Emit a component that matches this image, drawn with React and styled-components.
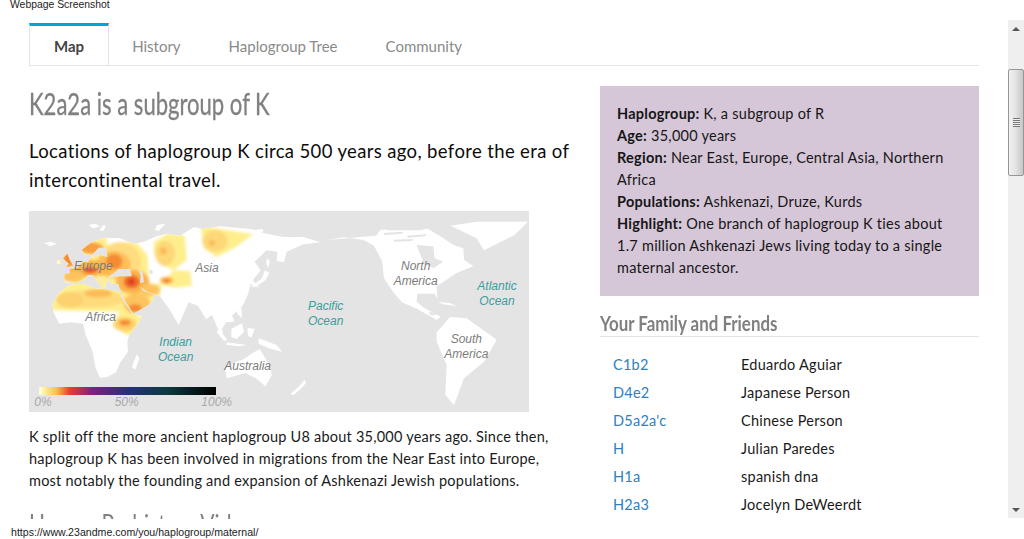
import React from 'react'
import styled, { createGlobalStyle } from 'styled-components'

const GlobalStyle = createGlobalStyle`
  html, body {
    margin: 0;
    height: 539px;
    overflow: hidden;
    background: #fff;
  }
`

const Page = styled.div`
  width: 1024px;
  height: 539px;
  display: flex;
  flex-direction: column;
  font-family: 'Lato', 'Noto Sans', sans-serif;
  color: #111;
`

const Caption = styled.div`
  height: 20px;
  flex: none;
  padding-left: 10px;
  font: 10.4px/10px 'Liberation Sans', Arial, sans-serif;
  color: #222;
`

const Viewport = styled.div`
  flex: none;
  height: 499px;
  display: flex;
  overflow: hidden;
`

const Content = styled.main`
  flex: 1;
  min-width: 0;
  padding: 3px 29px 0;
  overflow: hidden;
`

const Tabs = styled.nav`
  display: flex;
  height: 43px;
  box-sizing: border-box;
  border-bottom: 1px solid #e4e4e4;
`

const Tab = styled.a`
  box-sizing: border-box;
  height: 43px;
  padding: 0 24px;
  font-size: 15px;
  line-height: 40px;
  color: ${p => (p.$active ? '#444' : '#8a8a8a')};
  font-weight: ${p => (p.$active ? 700 : 400)};
  border-top: 3px solid ${p => (p.$active ? '#00a5d6' : 'transparent')};
  border-left: 1px solid ${p => (p.$active ? '#e4e4e4' : 'transparent')};
  border-right: 1px solid ${p => (p.$active ? '#e4e4e4' : 'transparent')};
  margin: 0 -1px;
  &:first-child { margin-left: 0; }
`

const Columns = styled.div`
  display: grid;
  grid-template-columns: 541px 379px;
  column-gap: 30px;
  padding-top: 20px;
`

const Title = styled.h1`
  margin: 0;
  font-size: 30px;
  line-height: 34px;
  font-weight: 400;
  color: #808080;
  -webkit-text-stroke: 0.3px #808080;
  white-space: nowrap;
  transform: scaleX(0.735);
  transform-origin: left center;
`

const Lead = styled.p`
  margin: 17px 0 16px;
  font-size: 18.5px;
  line-height: 29px;
  letter-spacing: 0.36px;
  color: #0c0c0c;
`

const MapFigure = styled.svg`
  display: block;
  width: 500px;
  height: 201px;
  background: #e4e4e4;
`

const MapLabel = styled.text`
  font-family: 'Liberation Sans', Arial, sans-serif;
  font-style: italic;
  font-size: 36px;
  text-anchor: middle;
  fill: ${p => (p.$ocean ? '#3d9c9c' : p.$scale ? '#a9a9a9' : '#7c7c7c')};
`

const Body = styled.p`
  margin: 14px 0 0;
  font-size: 14.5px;
  line-height: 22px;
  letter-spacing: 0.23px;
  color: #1a1a1a;
`

const SubTitle = styled.h2`
  margin: 0;
  font-size: 27px;
  font-weight: 400;
  color: #808080;
  white-space: nowrap;
  transform: scaleX(0.78);
  transform-origin: left center;
`

const ClippedTitle = styled(SubTitle)`
  margin-top: 17px;
  line-height: 30px;
`

const InfoPanel = styled.aside`
  height: 210px;
  box-sizing: border-box;
  padding: 17px;
  background: #d5c6d8;
  font-size: 14.5px;
  line-height: 22px;
  letter-spacing: 0.25px;
  color: #161616;
  b { font-weight: 700; }
`

const FriendsHead = styled.div`
  margin-top: 13px;
  height: 27px;
  border-bottom: 1px solid #e4e4e4;
  overflow: hidden;
`

const FriendsTitle = styled(SubTitle)`
  font-size: 20px;
  line-height: 28px;
  font-weight: 700;
  transform: scaleX(0.845);
`

const FriendList = styled.div`
  display: grid;
  grid-template-columns: 128px 1fr;
  grid-auto-rows: 28px;
  padding: 14px 0 0 13px;
  font-size: 14.5px;
  line-height: 28px;
  letter-spacing: 0.25px;
`

const Code = styled.a`
  color: #2d80c4;
`

const Person = styled.span`
  color: #1a1a1a;
`

const Scrollbar = styled.div`
  width: 16px;
  flex: none;
  height: 498px;
  display: flex;
  flex-direction: column;
  background: #efefef;
`

const ScrollArrow = styled.div`
  height: 17px;
  flex: none;
  display: flex;
  align-items: center;
  justify-content: center;
  &::before {
    content: '';
    border-left: 4px solid transparent;
    border-right: 4px solid transparent;
    ${p => (p.$down ? 'border-top: 4px solid #555;' : 'border-bottom: 4px solid #555;')}
  }
`

const ScrollGap = styled.div`
  height: 32px;
  flex: none;
`

const ScrollThumb = styled.div`
  height: 107px;
  flex: none;
  box-sizing: border-box;
  border: 1px solid #979797;
  border-radius: 2px;
  background: linear-gradient(90deg, #f1f1f1 0%, #e4e4e4 45%, #c6c6c6 100%);
  display: flex;
  align-items: center;
  justify-content: center;
`

const ThumbGrip = styled.div`
  width: 7px;
  height: 9px;
  background: repeating-linear-gradient(180deg, #777 0 1px, #eee 1px 2px);
`

const ScrollFill = styled.div`
  flex: 1;
`

const StatusBar = styled.div`
  flex: none;
  height: 20px;
  box-sizing: border-box;
  padding: 8px 0 0 11px;
  font: 10.6px/11px 'Liberation Sans', Arial, sans-serif;
  color: #222;
`

// map outlines, in 3x screen units
const landOld = `
M98,296 L118,262 L150,240 L190,236 L222,250 L262,252 L298,262 L312,292 L338,328 L366,334 L352,358 L328,388 L322,410 L324,440 L300,474 L288,502 L262,516 L240,518 L226,486 L218,440 L196,388 L190,356 L150,352 L118,356 L100,322 Z
M132,208 L150,204 L148,192 L172,188 L190,170 L204,172 L212,156 L240,150 L262,156 L258,128 L236,128 L216,150 L196,148 L184,136 L214,112 L254,98 L300,100 L340,116 L372,110 L410,94 L442,86 L480,92 L522,66 L548,72 L600,64 L692,72 L740,86 L790,96 L850,96 L902,112 L850,118 L800,140 L792,172 L770,168 L772,140 L740,136 L704,170 L722,196 L698,226 L720,250 L692,236 L684,268 L668,302 L636,332 L644,350 L618,352 L606,372 L612,398 L592,368 L576,330 L558,342 L534,302 L506,292 L476,360 L448,312 L420,274 L384,262 L362,246 L370,258 L404,270 L392,296 L340,326 L312,282 L298,250 L296,238 L270,234 L268,218 L300,214 L335,214 L330,192 L296,192 L282,204 L268,214 L262,228 L256,242 L244,222 L230,206 L238,222 L258,246 L246,248 L232,228 L218,210 L204,210 L196,222 L172,234 L134,232 Z
M128,160 L142,146 L150,166 L160,182 L136,188 L146,176 Z
M112,166 L124,164 L124,176 L110,178 Z
M72,114 L92,110 L110,116 L92,124 Z
M205,60 L225,56 L240,64 L220,70 Z
M700,76 L728,72 L730,80 L704,82 Z
M735,196 L748,204 L736,226 L706,246 L692,244 L724,222 Z
M742,160 L750,170 L744,190 L738,172 Z
M650,300 L664,310 L666,340 L652,326 Z
M596,372 L622,404 L612,408 L590,382 Z
M634,372 L666,354 L672,380 L650,402 L634,396 Z
M620,412 L680,420 L660,424 L620,420 Z
M682,368 L704,372 L694,398 L684,392 Z
M716,400 L770,420 L786,440 L746,430 L716,416 Z
M616,492 L650,470 L672,462 L698,444 L720,432 L746,478 L756,510 L736,544 L708,520 L676,504 L620,520 Z
M350,448 L358,460 L346,494 L336,486 Z
M238,76 L250,60 L258,62 L250,78 Z
M412,60 L436,56 L416,78 L404,74 Z
`

const landNew = `
M920,105 L972,97 L1030,105 L1062,122 L1086,168 L1092,220 L1120,262 L1146,292 L1170,302 L1192,312 L1250,345 L1262,335 L1212,308 L1190,290 L1192,266 L1244,266 L1252,282 L1250,244 L1310,204 L1360,184 L1332,164 L1330,130 L1300,120 L1270,100 L1225,72 L1082,74 L1068,92 Z
M1292,62 L1370,50 L1524,50 L1484,90 L1392,136 L1370,100 Z
M1250,382 L1290,336 L1340,340 L1430,404 L1392,470 L1332,520 L1302,600 L1276,570 L1280,480 L1250,410 Z
M812,566 L836,546 L854,524 L858,534 L838,556 L820,570 Z
M1252,290 L1290,294 L1310,304 L1270,298 Z
M1226,322 L1240,322 L1248,330 L1230,330 Z
`

const landGaps = `
M1190,120 L1240,124 L1244,160 L1270,170 L1240,190 L1210,172 Z
M1090,84 L1150,80 L1146,86 L1094,90 Z
M1160,92 L1220,88 L1216,94 L1164,98 Z
M1100,70 L1210,70 L1210,76 L1100,76 Z
M1120,104 L1180,102 L1176,108 L1124,110 Z
`

// inland seas, drawn over the heat
const seas = `
M356,194 L368,200 L372,232 L360,234 L362,214 Z
M388,194 L398,196 L398,206 L388,206 Z
`

// pale base of the heat area, everything else sits on top of it
const heatBase = `
M90,296 L130,245 L170,225 L120,235 L115,150 L150,135 L185,130 L215,105 L258,92 L262,120 L345,108 L382,150 L386,210 L374,236
L424,236 L420,272 L398,296 L350,332 L378,340 L332,396 L276,362 L300,320 L95,316 Z
M402,112 L445,84 L494,92 L500,165 L460,196 L422,176 L402,146 Z
M420,240 L462,196 L510,198 L516,242 L470,248 Z
M542,62 L700,88 L644,128 L590,156 L552,130 Z
`

const heat = [
  { x: 210, y: 282, rx: 104, ry: 26, c: '#ffdb7d' },
  { x: 150, y: 285, rx: 40, ry: 24, c: '#fdd070' },
  { x: 235, y: 265, rx: 42, ry: 12, c: '#fbbb58' },
  { x: 300, y: 168, rx: 62, ry: 56, c: '#ffdc80' },
  { x: 280, y: 178, rx: 52, ry: 40, c: '#fdc05a' },
  { x: 282, y: 170, rx: 25, ry: 23, c: '#f58a31' },
  { x: 215, y: 130, rx: 36, ry: 18, c: '#f9a03e' },
  { x: 205, y: 190, rx: 70, ry: 26, c: '#fbb34d' },
  { x: 210, y: 195, rx: 22, ry: 10, c: '#e8562b' },
  { x: 145, y: 160, rx: 16, ry: 22, c: '#f58a31' },
  { x: 160, y: 215, rx: 32, ry: 16, c: '#fdc35e' },
  { x: 338, y: 230, rx: 50, ry: 36, c: '#fbb34d' },
  { x: 335, y: 230, rx: 24, ry: 20, c: '#ee6a2c' },
  { x: 334, y: 230, rx: 9, ry: 9, c: '#d9371f' },
  { x: 390, y: 255, rx: 30, ry: 18, c: '#fdc35e' },
  { x: 350, y: 295, rx: 40, ry: 30, c: '#fdc35e' },
  { x: 345, y: 310, rx: 20, ry: 12, c: '#f58a31' },
  { x: 315, y: 358, rx: 34, ry: 22, c: '#ffd16b' },
  { x: 315, y: 353, rx: 18, ry: 9, c: '#f58a31' },
  { x: 435, y: 145, rx: 30, ry: 38, c: '#fdd878' },
  { x: 430, y: 138, rx: 11, ry: 11, c: '#fbbb58' },
  { x: 440, y: 226, rx: 20, ry: 11, c: '#fbb34d' },
  { x: 440, y: 228, rx: 8, ry: 5, c: '#f0702c' },
  { x: 585, y: 108, rx: 38, ry: 32, c: '#fdd878' },
  { x: 576, y: 114, rx: 10, ry: 9, c: '#fbbb58' },
]

const friends = [
  ['C1b2', 'Eduardo Aguiar'],
  ['D4e2', 'Japanese Person'],
  ["D5a2a'c", 'Chinese Person'],
  ['H', 'Julian Paredes'],
  ['H1a', 'spanish dna'],
  ['H2a3', 'Jocelyn DeWeerdt'],
]

const HaploMap = () => (
  <MapFigure viewBox="27 18 1500 603">
    <defs>
      <clipPath id="land-clip">
        <path d={landOld} />
      </clipPath>
      <linearGradient id="scale">
        <stop offset="0" stopColor="#fff" />
        <stop offset="0.02" stopColor="#fff6a8" />
        <stop offset="0.1" stopColor="#fdb94e" />
        <stop offset="0.17" stopColor="#e8402a" />
        <stop offset="0.3" stopColor="#7a2182" />
        <stop offset="0.5" stopColor="#27307f" />
        <stop offset="0.72" stopColor="#0c3a40" />
        <stop offset="1" stopColor="#000" />
      </linearGradient>
      <filter id="soft" x="-20%" y="-20%" width="140%" height="140%">
        <feGaussianBlur stdDeviation="5" />
      </filter>
      <filter id="edge" x="-2%" y="-2%" width="104%" height="104%">
        <feGaussianBlur stdDeviation="1.5" />
      </filter>
    </defs>
    <g filter="url(#edge)">
      <path d={landOld} fill="#fff" />
      <path d={landNew} fill="#fff" />
      <path d={landGaps} fill="#e4e4e4" />
    </g>
    <g clipPath="url(#land-clip)">
      <g filter="url(#soft)">
        <path d={heatBase} fill="#ffee8c" />
        {heat.map((h, i) => (
          <ellipse key={i} cx={h.x} cy={h.y} rx={h.rx} ry={h.ry} fill={h.c} />
        ))}
      </g>
    </g>
    <path d={seas} fill="#e4e4e4" />
    <MapLabel x="220" y="196">Europe</MapLabel>
    <MapLabel x="561" y="202">Asia</MapLabel>
    <MapLabel x="242" y="349">Africa</MapLabel>
    <MapLabel x="683" y="496">Australia</MapLabel>
    <MapLabel x="1187" y="195">North</MapLabel>
    <MapLabel x="1187" y="239">America</MapLabel>
    <MapLabel x="1339" y="414">South</MapLabel>
    <MapLabel x="1339" y="458">America</MapLabel>
    <MapLabel $ocean x="467" y="424">Indian</MapLabel>
    <MapLabel $ocean x="467" y="468">Ocean</MapLabel>
    <MapLabel $ocean x="917" y="315">Pacific</MapLabel>
    <MapLabel $ocean x="917" y="359">Ocean</MapLabel>
    <MapLabel $ocean x="1431" y="256">Atlantic</MapLabel>
    <MapLabel $ocean x="1431" y="299">Ocean</MapLabel>
    <rect x="58" y="546" width="530" height="24" fill="url(#scale)" />
    <MapLabel $scale x="69" y="602">0%</MapLabel>
    <MapLabel $scale x="320" y="602">50%</MapLabel>
    <MapLabel $scale x="590" y="602">100%</MapLabel>
  </MapFigure>
)

export default function App() {
  return (
    <Page>
      <GlobalStyle />
      <Caption>Webpage Screenshot</Caption>
      <Viewport>
        <Content>
          <Tabs>
            <Tab $active>Map</Tab>
            <Tab>History</Tab>
            <Tab>Haplogroup Tree</Tab>
            <Tab>Community</Tab>
          </Tabs>
          <Columns>
            <section>
              <Title>K2a2a is a subgroup of K</Title>
              <Lead>Locations of haplogroup K circa 500 years ago, before the era of intercontinental travel.</Lead>
              <HaploMap />
              <Body>K split off the more ancient haplogroup U8 about 35,000 years ago. Since then, haplogroup K has been involved in migrations from the Near East into Europe, most notably the founding and expansion of Ashkenazi Jewish populations.</Body>
              <ClippedTitle>Human Prehistory Video</ClippedTitle>
            </section>
            <section>
              <InfoPanel>
                <b>Haplogroup:</b> K, a subgroup of R<br />
                <b>Age:</b> 35,000 years<br />
                <b>Region:</b> Near East, Europe, Central Asia, Northern Africa<br />
                <b>Populations:</b> Ashkenazi, Druze, Kurds<br />
                <b>Highlight:</b> One branch of haplogroup K ties about 1.7 million Ashkenazi Jews living today to a single maternal ancestor.
              </InfoPanel>
              <FriendsHead>
                <FriendsTitle>Your Family and Friends</FriendsTitle>
              </FriendsHead>
              <FriendList>
                {friends.map(([code, name]) => (
                  <React.Fragment key={code}>
                    <Code>{code}</Code>
                    <Person>{name}</Person>
                  </React.Fragment>
                ))}
              </FriendList>
            </section>
          </Columns>
        </Content>
        <Scrollbar>
          <ScrollArrow />
          <ScrollGap />
          <ScrollThumb><ThumbGrip /></ScrollThumb>
          <ScrollFill />
          <ScrollArrow $down />
        </Scrollbar>
      </Viewport>
      <StatusBar>https://www.23andme.com/you/haplogroup/maternal/</StatusBar>
    </Page>
  )
}
